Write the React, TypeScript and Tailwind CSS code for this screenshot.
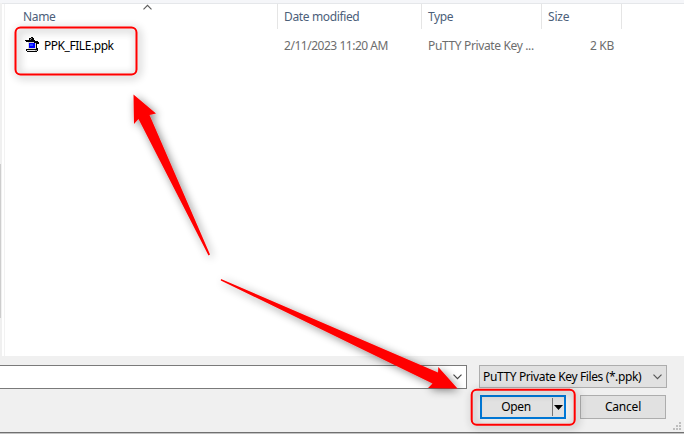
import type { ReactNode } from 'react';

function Cell({ className = '', children }: { className?: string; children?: ReactNode }) {
  return <div className={`shrink-0 whitespace-nowrap ${className}`}>{children}</div>;
}

function Chevron({ className = '' }: { className?: string }) {
  return (
    <svg width="9" height="6" viewBox="0 0 9 6" className={className} fill="none" stroke="currentColor" strokeWidth="1.15">
      <path d="M.5.7 4.5 4.7 8.5.7" />
    </svg>
  );
}

function PuttyIcon() {
  return (
    <svg width="14" height="16" viewBox="0 0 14 16" shapeRendering="crispEdges">
      <path fill="#000" d="M6 0h2v1h1v2h1v1h3v1h1v2h-2v4h1v3h-1v1H2v-1H1v-2h2V5H1V4H0V3h4V1h2z" />
      <path fill="#888" d="M6 1h1v1H6zM5 2h1v1H5z" />
      <path fill="#d8d8d8" d="M3 5h6v1H4v5H3zM10 6h1v5h-1zM3 11h8v1H3z" />
      <path fill="#0000ff" d="M4 6h6v5H4z" />
      <path fill="#2a4dff" d="M5 7h3v2H5z" />
      <path fill="#e8e8e8" d="M2 13h8v1H2z" />
      <path fill="#a5a5a5" d="M10 13h2v1h-2z" />
    </svg>
  );
}

function FileList() {
  return (
    <div className="flex h-[353px]">
      <div className="w-[2px] bg-[#f0f0f0] pt-[161px]">
        <div className="h-[154px] w-px bg-[#cdcdcd]" />
      </div>
      <div className="ml-[2px] w-px bg-[#f2f2f2]" />
      <div className="-ml-[3px] flex-1 border-t border-[#e5e7ea] pl-[3px]">
        <div className="flex h-[25px] leading-[26px] text-[#4c607a]">
          <Cell className="relative w-[273px] border-r border-[#e5e5e5] pl-[18px] tracking-[-0.35px]">
            Name
            <Chevron className="absolute left-[138px] top-0 rotate-180 text-[#5c5c5c]" />
          </Cell>
          <Cell className="w-[144px] border-r border-[#e5e5e5] pl-[6px] tracking-[-0.36px]">Date modified</Cell>
          <Cell className="w-[120px] border-r border-[#e5e5e5] pl-[6px] tracking-[-0.4px]">Type</Cell>
          <Cell className="w-[80px] border-r border-[#e5e5e5] pl-[6px] tracking-[-0.2px]">Size</Cell>
        </div>
        <div className="mt-[5px] flex h-[24px] leading-[24px] text-[#6d6d6d]">
          <Cell className="flex w-[273px] pl-[20px] text-black">
            <div className="mt-[3px] w-[19px]"><PuttyIcon /></div>
            <span className="tracking-[-0.45px]">PPK_FILE.ppk</span>
          </Cell>
          <Cell className="w-[144px] pl-[6px] tracking-[-0.47px]">2/11/2023 11:20 AM</Cell>
          <Cell className="w-[120px] pl-[6px] tracking-[-0.36px]">PuTTY Private Key ...</Cell>
          <Cell className="w-[80px] pr-[8px] text-right tracking-[-0.3px]">2 KB</Cell>
        </div>
      </div>
    </div>
  );
}

function Footer() {
  return (
    <div className="flex h-[78px] flex-col border-b border-[#c3c3c3] bg-[#f0f0f0]">
      <div className="flex flex-1 border-b border-[#707070] pt-[9px]">
        <div className="flex h-[24px] w-[467px] items-center justify-end border border-l-0 border-[#7a7a7a] bg-white pr-[4px]">
          <Chevron className="text-[#444]" />
        </div>
        <div className="ml-[12px] w-[188px] text-black">
          <div className="flex h-[23px] items-center justify-between border border-[#adadad] bg-[#e1e1e1] pl-[3px] pr-[4px]">
            <span className="whitespace-nowrap tracking-[-0.38px]">PuTTY Private Key Files (*.ppk)</span>
            <Chevron className="text-[#555]" />
          </div>
          <div className="mt-[7px] flex pl-px">
            <div className="flex h-[24px] w-[86px] items-center border-2 border-[#0078d7] bg-[#e1e1e1]">
              <span className="w-[70px] pr-[2px] text-center tracking-[-0.4px]">Open</span>
              <div className="h-[18px] w-px bg-[#777]" />
              <svg width="9" height="5" viewBox="0 0 9 5" className="ml-px shrink-0"><path d="M0 0h9L4.5 5z" /></svg>
            </div>
            <div className="ml-[14px] flex h-[24px] w-[86px] shrink-0 items-center justify-center border border-[#adadad] bg-[#e1e1e1]">
              <span className="tracking-[-0.2px]">Cancel</span>
            </div>
          </div>
        </div>
        <svg width="8" height="8" viewBox="0 0 8 8" className="ml-[6px] mt-[57px]" fill="#bfbfbf" shapeRendering="crispEdges">
          <path d="M6 0h2v2H6zM3 3h2v2H3zM6 3h2v2H6zM0 6h2v2H0zM3 6h2v2H3zM6 6h2v2H6z" />
        </svg>
      </div>
    </div>
  );
}

function Annotations() {
  return (
    <svg className="pointer-events-none absolute inset-0" width="684" height="434" viewBox="0 0 684 434">
      <defs>
        <filter id="shadow" filterUnits="userSpaceOnUse" x="0" y="0" width="684" height="434">
          <feDropShadow dx="2" dy="2" stdDeviation="4" floodColor="#000" floodOpacity="0.48" />
        </filter>
      </defs>
      <g filter="url(#shadow)" fill="none" stroke="#f00" strokeWidth="2">
        <rect x="15.5" y="27.5" width="121" height="47" rx="5" />
      </g>
      <g filter="url(#shadow)" fill="none" stroke="#f00" strokeWidth="2">
        <rect x="471.7" y="389.7" width="103" height="35" rx="5" />
      </g>
      <g filter="url(#shadow)" fill="#f00">
        <path d="M133.5 94.5 156 113.5 149.5 115 210 254.5 208.5 255.5 138.5 119 134 124z" />
        <path d="M221 279 438 372.5 438.3 367 457.5 388.5 428 388 432.5 383.5 220.8 280.5z" />
      </g>
    </svg>
  );
}

export default function App() {
  return (
    <div className="relative h-[434px] w-[684px] overflow-hidden bg-white font-['Noto_Sans','Open_Sans',sans-serif] text-[12px]">
      <div className="h-[3px] bg-[#f5f6f9]" />
      <FileList />
      <Footer />
      <Annotations />
    </div>
  );
}
